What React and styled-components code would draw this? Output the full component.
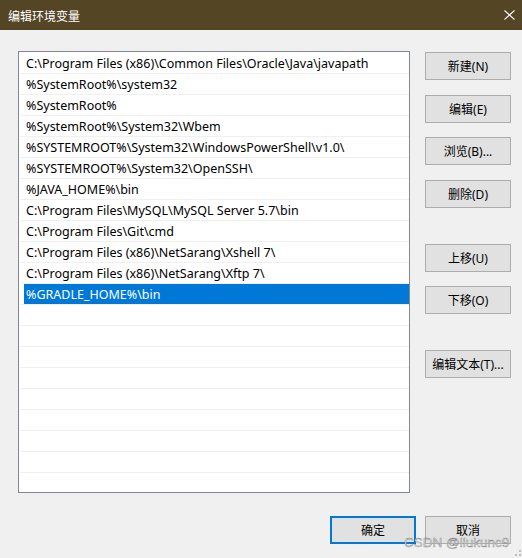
import styled, { createGlobalStyle } from "styled-components";

const GlobalStyle = createGlobalStyle`
    html, body {
        margin: 0;
        padding: 0;
        background: #f0f0f0;
    }
    * {
        box-sizing: border-box;
    }
`

const paths = [
    "C:\\Program Files (x86)\\Common Files\\Oracle\\Java\\javapath",
    "%SystemRoot%\\system32",
    "%SystemRoot%",
    "%SystemRoot%\\System32\\Wbem",
    "%SYSTEMROOT%\\System32\\WindowsPowerShell\\v1.0\\",
    "%SYSTEMROOT%\\System32\\OpenSSH\\",
    "%JAVA_HOME%\\bin",
    "C:\\Program Files\\MySQL\\MySQL Server 5.7\\bin",
    "C:\\Program Files\\Git\\cmd",
    "C:\\Program Files (x86)\\NetSarang\\Xshell 7\\",
    "C:\\Program Files (x86)\\NetSarang\\Xftp 7\\",
    "%GRADLE_HOME%\\bin",
]

const sideButtons = [
    { label: "新建(N)", top: 1 },
    { label: "编辑(E)", top: 15 },
    { label: "浏览(B)...", top: 14 },
    { label: "删除(D)", top: 15 },
    { label: "上移(U)", top: 36 },
    { label: "下移(O)", top: 14 },
    { label: "编辑文本(T)...", top: 36 },
]

export default function App(){
    const rows = [...paths]
    while (rows.length < 21) rows.push("")
    return(
        <Window>
            <GlobalStyle/>
            <TitleBar>
                <Title>编辑环境变量</Title>
                <Close>
                    <svg width="11" height="10" viewBox="0 0 11 10">
                        <path d="M0.5 0.5 L10.5 9.5 M10.5 0.5 L0.5 9.5" stroke="#ffffff" strokeWidth="1.1" fill="none"/>
                    </svg>
                </Close>
            </TitleBar>
            <Body>
                <ListBox>
                    {rows.map((p, i) => <Row key={i}>
                        <Cell $selected={i === 11}>{p}</Cell>
                    </Row>)}
                </ListBox>
                <SideColumn>
                    {sideButtons.map(b => <Button key={b.label} $mt={b.top}>{b.label}</Button>)}
                </SideColumn>
            </Body>
            <Footer>
                <Button $default>确定</Button>
                <Button>取消</Button>
            </Footer>
            <Watermark>CSDN @liukunc9</Watermark>
            <Grip>
                <svg width="10" height="10" viewBox="0 0 10 10">
                    <rect x="8" y="0" width="2" height="2" fill="#bcbcbc"/>
                    <rect x="4" y="4" width="2" height="2" fill="#bcbcbc"/>
                    <rect x="8" y="4" width="2" height="2" fill="#bcbcbc"/>
                    <rect x="0" y="8" width="2" height="2" fill="#bcbcbc"/>
                    <rect x="4" y="8" width="2" height="2" fill="#bcbcbc"/>
                    <rect x="8" y="8" width="2" height="2" fill="#bcbcbc"/>
                </svg>
            </Grip>
        </Window>
    )
}

const Window = styled.div`
    position: relative;
    width: 522px;
    height: 558px;
    background: #f0f0f0;
    font-family: "Noto Sans", "Noto Sans CJK SC", sans-serif;
    font-size: 12px;
    color: #000000;
    overflow: hidden;
`
const TitleBar = styled.div`
    display: flex;
    align-items: center;
    justify-content: space-between;
    height: 30px;
    background: #544525;
    padding: 0 6px 0 8px;
`
const Title = styled.span`
    color: #ffffff;
    font-family: "Noto Sans CJK SC", sans-serif;
    font-size: 12px;
`
const Close = styled.span`
    display: flex;
    align-items: center;
    justify-content: center;
    width: 12px;
    height: 12px;
    margin-right: 1px;
`
const Body = styled.div`
    display: flex;
    align-items: flex-start;
    padding: 21px 0 0 18px;
`
const ListBox = styled.div`
    width: 392px;
    height: 442px;
    border: 1px solid #828790;
    background: #ffffff;
    padding: 1px 0 0 1px;
    overflow: hidden;
`
const Row = styled.div`
    display: flex;
    height: 21px;
    border-bottom: 1px solid #f0f0f0;
`
const Cell = styled.div`
    flex: 1;
    display: flex;
    align-items: center;
    margin-left: 4px;
    padding-left: 2px;
    white-space: nowrap;
    font-size: 12.5px;
    background: ${p => p.$selected ? "#0078d7" : "transparent"};
    color: ${p => p.$selected ? "#ffffff" : "#000000"};
`
const SideColumn = styled.div`
    display: flex;
    flex-direction: column;
    margin-left: 15px;
`
const Button = styled.button`
    width: 86px;
    height: 28px;
    margin-top: ${p => p.$mt || 0}px;
    padding: 0;
    background: #e1e1e1;
    border: ${p => p.$default ? "2px solid #0078d7" : "1px solid #adadad"};
    font-family: "Noto Sans", "Noto Sans CJK SC", sans-serif;
    font-size: 12px;
    color: #000000;
`
const Footer = styled.div`
    display: flex;
    justify-content: flex-end;
    gap: 9px;
    padding: 23px 11px 0 0;
`
const Watermark = styled.div`
    position: absolute;
    left: 404px;
    top: 535px;
    font-family: "Liberation Sans", sans-serif;
    font-size: 13.5px;
    color: rgba(225, 225, 225, 0.9);
    -webkit-text-stroke: 0.4px rgba(70, 70, 70, 0.7);
    pointer-events: none;
`
const Grip = styled.div`
    position: absolute;
    right: 1px;
    bottom: 1px;
    width: 10px;
    height: 10px;
`
